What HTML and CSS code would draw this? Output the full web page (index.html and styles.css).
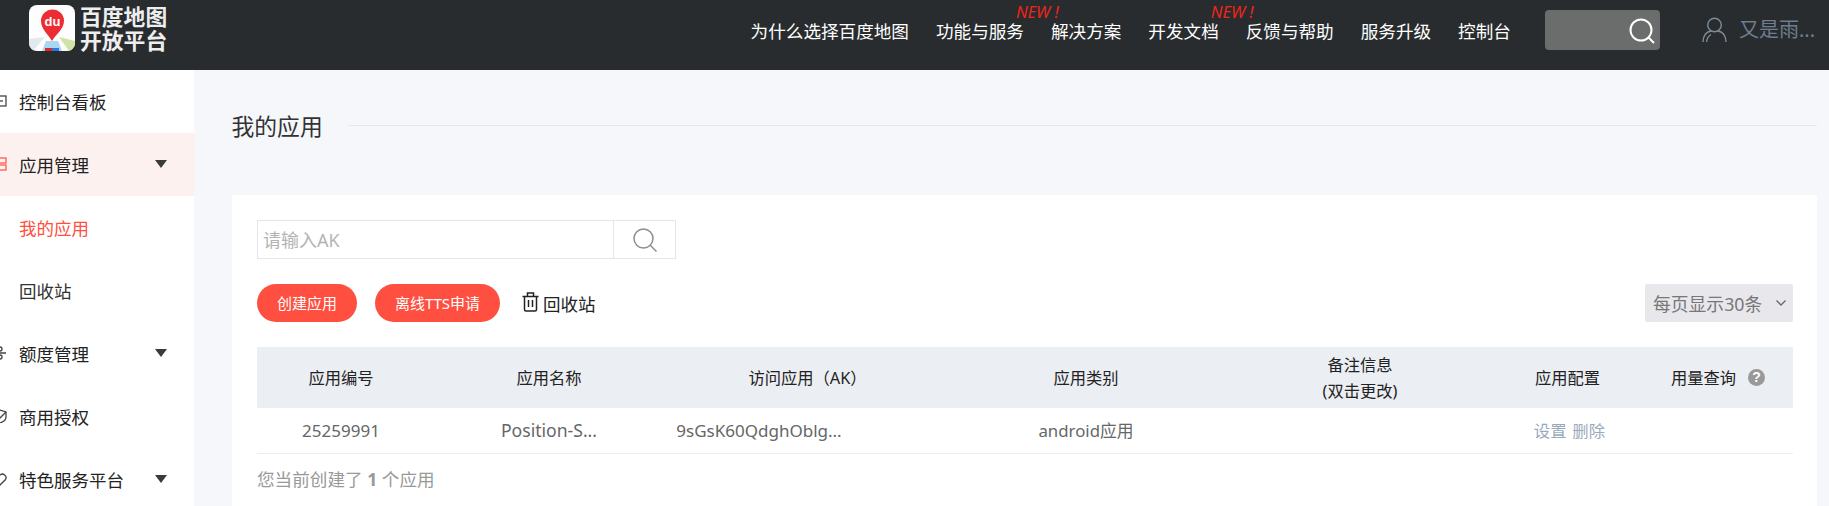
FILE: index.html
```html
<!DOCTYPE html>
<html lang="zh-CN">
<head>
<meta charset="utf-8">
<title>我的应用</title>
<link rel="stylesheet" href="styles.css">
</head>
<body>
<header class="topbar">
  <div class="logo">
    <svg class="logo-mark" viewBox="0 0 46 46" width="46" height="46">
      <defs><clipPath id="lc"><rect width="46" height="46" rx="8"/></clipPath></defs>
      <g clip-path="url(#lc)">
        <rect width="46" height="46" fill="#fdfdfd"/>
        <path d="M0 34 L16 32 L4 46 L0 46Z" fill="#dfe9ee"/>
        <path d="M30 32 L46 36 L46 46 L40 46Z" fill="#cfe3a8"/>
        <path d="M17 36 L29 36 L33 46 L13 46Z" fill="#a9d6f2"/>
        <rect x="16" y="43" width="7" height="3" fill="#e0262c"/>
        <rect x="23" y="43" width="7" height="3" fill="#2a7be0"/>
        <path d="M23 36 C19 29 12 24 12 16 A11.5 11.5 0 0 1 35 16 C35 24 27 29 23 36Z" fill="#ed2c33"/>
        <text x="23.5" y="21" class="logo-du">du</text>
      </g>
    </svg>
    <div class="logo-text"><span>百度地图</span><span>开放平台</span></div>
  </div>
  <nav class="nav">
    <a class="nav-item">为什么选择百度地图</a>
    <a class="nav-item">功能与服务<i class="new-badge">NEW !</i></a>
    <a class="nav-item">解决方案</a>
    <a class="nav-item">开发文档<i class="new-badge">NEW !</i></a>
    <a class="nav-item">反馈与帮助</a>
    <a class="nav-item">服务升级</a>
    <a class="nav-item">控制台</a>
  </nav>
  <div class="top-search">
    <svg viewBox="0 0 26 26" width="26" height="26" fill="none" stroke="#fff" stroke-width="2">
      <circle cx="12" cy="12" r="10.5"/><path d="M19.5 19.5 L25 25"/>
    </svg>
  </div>
  <div class="user">
    <svg viewBox="0 0 25 26" width="25" height="26" fill="none" stroke="#7f8b99" stroke-width="1.4">
      <circle cx="12.5" cy="8" r="6.8"/><path d="M1 25 C1 18 5 14.5 9 14 M24 25 C24 18 20 14.5 16 14"/><path d="M4.5 25 C5 21 6.5 19 9 17.5"/>
    </svg>
    <span>又是雨...</span>
  </div>
</header>
<div class="layout">
  <aside class="sidebar">
    <div class="side-item">
      <svg class="side-icon" viewBox="0 0 14 14" fill="none" stroke="#444" stroke-width="1.3"><rect x="1" y="2" width="12" height="10"/><path d="M1 7 H10"/></svg>
      <span>控制台看板</span>
    </div>
    <div class="side-item active">
      <svg class="side-icon" viewBox="0 0 14 14" fill="none" stroke="#ff5a4c" stroke-width="1.3"><rect x="1" y="1" width="12" height="5"/><rect x="1" y="8" width="12" height="5"/></svg>
      <span>应用管理</span><b class="caret"></b>
    </div>
    <div class="side-item sub current"><span>我的应用</span></div>
    <div class="side-item sub"><span>回收站</span></div>
    <div class="side-item">
      <svg class="side-icon" viewBox="0 0 14 14" fill="none" stroke="#444" stroke-width="1.3"><circle cx="7" cy="3" r="2"/><circle cx="7" cy="11" r="2"/><path d="M1 3 L4 7 L1 11 M4 7 H13"/></svg>
      <span>额度管理</span><b class="caret"></b>
    </div>
    <div class="side-item">
      <svg class="side-icon" viewBox="0 0 14 14" fill="none" stroke="#444" stroke-width="1.3"><path d="M7 1 L13 3 V8 C13 11 10 13 7 14 C4 13 1 11 1 8 V3Z"/><path d="M5 7 L7 9 L13 3"/></svg>
      <span>商用授权</span>
    </div>
    <div class="side-item">
      <svg class="side-icon" viewBox="0 0 14 14" fill="none" stroke="#444" stroke-width="1.3"><path d="M7 13 L1.5 7.5 A3.6 3.6 0 0 1 7 3 A3.6 3.6 0 0 1 12.5 7.5Z"/></svg>
      <span>特色服务平台</span><b class="caret"></b>
    </div>
  </aside>
  <main class="main">
    <div class="page-title"><h1>我的应用</h1><div class="title-line"></div></div>
    <section class="card">
      <div class="search-box">
        <div class="search-input">请输入AK</div>
        <div class="search-btn">
          <svg viewBox="0 0 24 24" width="24" height="24" fill="none" stroke="#8d8d8d" stroke-width="1.5"><circle cx="10.5" cy="10.5" r="9.5"/><path d="M17.5 17.5 L23.5 23.5"/></svg>
        </div>
      </div>
      <div class="toolbar">
        <button class="pill pill-a">创建应用</button>
        <button class="pill pill-b">离线TTS申请</button>
        <a class="recycle">
          <svg viewBox="0 0 17 20" width="17" height="20" fill="none" stroke="#222" stroke-width="1.5"><path d="M0.5 4.5 H16.5 M5.5 4 V1 H11.5 V4"/><path d="M2.5 4.5 V17.5 Q2.5 19 4 19 H13 Q14.5 19 14.5 17.5 V4.5"/><path d="M6.5 8 V15 M10.5 8 V15"/></svg>
          <span>回收站</span>
        </a>
        <div class="page-size">
          <span>每页显示30条</span>
          <svg viewBox="0 0 10 6" width="10" height="6" fill="none" stroke="#666" stroke-width="1.3"><path d="M0.5 0.5 L5 5 L9.5 0.5"/></svg>
        </div>
      </div>
      <table class="apps">
        <colgroup>
          <col class="c1"><col class="c2"><col class="c3"><col class="c4"><col class="c5"><col class="c6"><col class="c7">
        </colgroup>
        <thead>
          <tr>
            <th>应用编号</th><th>应用名称</th><th class="th-ak">访问应用（AK）</th><th>应用类别</th>
            <th>备注信息<br>(双击更改)</th><th>应用配置</th>
            <th class="th-usage"><span class="usage">用量查询<em class="help">?</em></span></th>
          </tr>
        </thead>
        <tbody>
          <tr>
            <td>25259991</td><td class="name">Position-S...</td><td class="ak">9sGsK60QdghOblg...</td><td class="kind">android应用</td><td></td>
            <td class="ops">设置 删除</td><td></td>
          </tr>
        </tbody>
      </table>
      <p class="summary">您当前创建了 <b>1</b> 个应用</p>
    </section>
  </main>
</div>
</body>
</html>
```

FILE: styles.css
```css
* { box-sizing: border-box; }
html, body { margin: 0; height: 100%; overflow: hidden; }
body {
  font-family: "Noto Sans", "Noto Sans CJK SC", sans-serif;
  background: #f5f7fb;
  color: #333;
}
.topbar {
  display: flex;
  align-items: center;
  height: 70px;
  padding: 0 14px 10px 29px;
  background: #282c2e;
  color: #fff;
}
.logo { display: flex; align-items: center; gap: 5px; margin-top: -5px; }
.logo-mark { display: block; }
.logo-du { font: bold 13px "Liberation Sans", sans-serif; fill: #fff; text-anchor: middle; }
.logo-text {
  display: flex;
  flex-direction: column;
  font: 700 21.8px/24px "Noto Sans CJK SC", sans-serif;
  color: #eee;
}
.nav { display: flex; gap: 27px; margin-left: auto; font-size: 17.6px; line-height: 24px; font-family: "Noto Sans CJK SC", sans-serif; font-weight: 400; padding-top: 2px; }
.nav-item { position: relative; white-space: nowrap; }
.new-badge {
  position: absolute;
  left: calc(100% - 8px);
  top: -16px;
  color: #f0241a;
  font: italic 16.5px/18px "Noto Sans", sans-serif;
  white-space: nowrap;
}
.top-search {
  display: flex;
  align-items: center;
  justify-content: flex-end;
  width: 115px;
  height: 40px;
  margin-left: 34px;
  padding-right: 5px;
  background: #6b6d6c;
  border-radius: 4px;
}
.top-search svg { display: block; margin-top: 1px; }
.user { display: flex; align-items: center; gap: 12px; margin-left: 42px; color: #6f7d8e; font-size: 20px; line-height: 24px; font-family: "Noto Sans", "Noto Sans CJK SC", sans-serif; font-weight: 400; white-space: nowrap; }
.user svg { display: block; }
.layout { display: flex; height: 436px; overflow: hidden; }
.sidebar { flex: 0 0 194px; background: #fff; overflow: hidden; }
.side-item {
  display: flex;
  align-items: center;
  height: 63px;
  padding: 0 27px 1px 0;
  font-size: 17.5px;
  font-family: "Noto Sans CJK SC", sans-serif;
  font-weight: 400;
  color: #222;
}
.side-item.active { background: #fdf1ef; }
.side-item.sub { padding-left: 19px; color: #333; }
.side-item.current { color: #ff4f40; }
.side-icon { flex: none; width: 14px; height: 14px; margin-left: -7px; margin-right: 12px; }
.caret {
  margin-left: auto;
  width: 0;
  height: 0;
  border-left: 6px solid transparent;
  border-right: 6px solid transparent;
  border-top: 8px solid #3a3a3a;
}
.main { flex: 1; min-width: 0; padding: 39px 12px 0 37.5px; }
.page-title { display: flex; align-items: center; height: 34px; }
.page-title h1 { margin: 0; font: 400 22.8px/34px "Noto Sans CJK SC", sans-serif; color: #333; }
.title-line { flex: 1; height: 1px; margin: -2px 0 0 25px; background: #e6e8ec; }
.card { margin: 52px 0 0 0.5px; padding: 25px 24px 0 25px; background: #fff; height: 311px; }
.search-box { display: flex; width: 419px; height: 39px; border: 1px solid #e3e6ee; }
.search-input { flex: 1; padding-left: 5px; font-size: 18px; line-height: 38px; color: #b4b4b4; font-family: "Noto Sans", "Noto Sans CJK SC", sans-serif; border-right: 1px solid #e3e6ee; font-weight: 400; }
.search-btn { flex: 0 0 61px; display: flex; align-items: center; justify-content: center; }
.search-btn svg { display: block; }
.toolbar { display: flex; align-items: center; margin-top: 25px; height: 38px; }
.pill {
  height: 38px;
  padding: 0;
  border: 0;
  border-radius: 19px;
  background: #ff4f40;
  color: #fff;
  font: 400 15px/38px "Noto Sans", "Noto Sans CJK SC", sans-serif;
}
.pill-a { width: 100px; }
.pill-b { width: 125px; margin-left: 18px; }
.recycle { display: flex; align-items: center; gap: 4px; margin-left: 22px; font-size: 17.5px; font-family: "Noto Sans CJK SC", sans-serif; font-weight: 400; color: #222; }
.recycle svg { display: block; margin-top: -2px; }
.page-size {
  display: flex;
  align-items: center;
  justify-content: space-between;
  width: 148px;
  height: 38px;
  margin-left: auto;
  padding: 0 7px 0 8px;
  background: #e8e8ec;
  border-radius: 2px;
  font-size: 17.8px;
  font-weight: 400;
  color: #777;
  font-family: "Noto Sans", "Noto Sans CJK SC", sans-serif;
}
.apps { width: 1536px; margin-top: 25px; border-collapse: collapse; table-layout: fixed; }
.c1 { width: 168px; } .c2 { width: 248px; } .c3 { width: 264px; } .c4 { width: 298px; }
.c5 { width: 250px; } .c6 { width: 165px; } .c7 { width: 143px; }
.apps th {
  height: 61px;
  padding: 0;
  background: #ebeef3;
  font-size: 16.3px;
  font-weight: 400;
  line-height: 26px;
  color: #222;
  text-align: center;
}
.apps th.th-ak { padding-left: 5px; }
.apps th.th-usage { padding-right: 7px; }
.apps td {
  height: 45px;
  padding: 0;
  border-bottom: 1px solid #eeeeee;
  font-size: 17px;
  color: #666;
  font-weight: 400;
  text-align: center;
}
.apps td.name { font-size: 17.6px; }
.apps td.ak { padding-right: 92px; }
.apps td.kind { font-size: 16.8px; }
.apps td.ops { padding-left: 4px; font-size: 16.4px; word-spacing: 1.5px; color: #9aaabd; }
.usage { display: inline-flex; align-items: center; gap: 12px; }
.help {
  display: inline-block;
  width: 17px;
  height: 17px;
  border-radius: 50%;
  background: #999;
  color: #fff;
  font: bold 14px/17px "Liberation Sans", sans-serif;
  text-align: center;
}
.summary { margin: 13px 0 0; font-size: 17.6px; line-height: 24px; color: #999; font-weight: 400; }
.summary b { font-weight: 700; }
```
